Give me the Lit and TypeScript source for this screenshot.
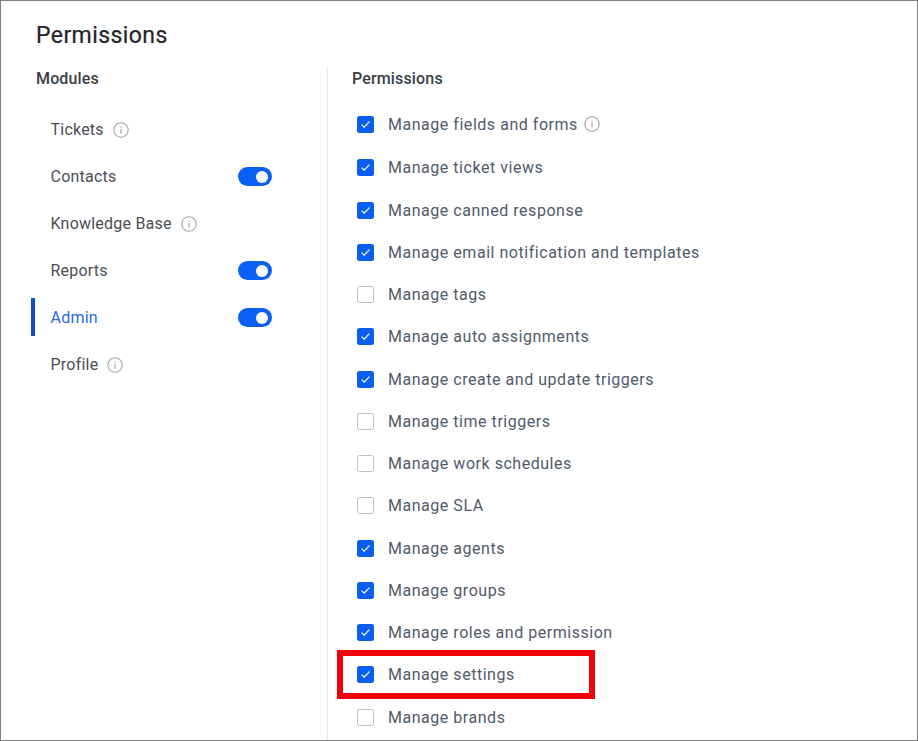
import { LitElement, html, css, svg } from "lit";
import { customElement } from "lit/decorators.js";

const info = svg`<svg class="info" viewBox="0 0 16 16" width="16" height="16" fill="none">
  <circle cx="8" cy="8" r="7.2" stroke="#a3a6aa" stroke-width="1.1"/>
  <rect x="7.4" y="7" width="1.2" height="4.6" fill="#a3a6aa"/>
  <rect x="7.4" y="4.4" width="1.2" height="1.3" fill="#a3a6aa"/>
</svg>`;

const modules = [
  { name: "Tickets", info: true },
  { name: "Contacts", toggle: true },
  { name: "Knowledge Base", info: true },
  { name: "Reports", toggle: true },
  { name: "Admin", toggle: true, active: true },
  { name: "Profile", info: true },
];

const perms: [string, boolean, boolean?][] = [
  ["Manage fields and forms", true, true],
  ["Manage ticket views", true],
  ["Manage canned response", true],
  ["Manage email notification and templates", true],
  ["Manage tags", false],
  ["Manage auto assignments", true],
  ["Manage create and update triggers", true],
  ["Manage time triggers", false],
  ["Manage work schedules", false],
  ["Manage SLA", false],
  ["Manage agents", true],
  ["Manage groups", true],
  ["Manage roles and permission", true],
  ["Manage settings", true],
  ["Manage brands", false],
];

@customElement("app-root")
export class AppRoot extends LitElement {
  static styles = css`
    :host {
      display: block;
      width: 918px;
      height: 741px;
      font-family: Roboto, "Liberation Sans", sans-serif;
      overflow: hidden;
    }
    .frame {
      position: relative;
      box-sizing: border-box;
      width: 918px;
      height: 741px;
      border: 1px solid #7f7f7f;
      background: #fff;
      padding: 21px 0 0 35px;
      display: flex;
      flex-direction: column;
    }
    h1 {
      margin: 0;
      font-size: 23px;
      line-height: 28px;
      font-weight: 400;
      letter-spacing: 0.42px;
      color: #1f2328;
      -webkit-text-stroke: 0.2px #1f2328;
    }
    .cols {
      flex: 1;
      display: flex;
      margin-top: 17px;
      min-height: 0;
    }
    .left {
      width: 292px;
      box-sizing: border-box;
      border-right: 1.5px solid #e6e8ec;
      flex: none;
    }
    .head {
      font-size: 16px;
      line-height: 20px;
      font-weight: 500;
      color: #3a3e45;
      letter-spacing: 0.15px;
      margin-top: 2px;
    }
    .mods {
      margin-top: 17px;
      display: flex;
      flex-direction: column;
    }
    .mod {
      position: relative;
      height: 47px;
      display: flex;
      align-items: center;
      padding: 0 55px 0 14.5px;
      gap: 9px;
      font-size: 16px;
      letter-spacing: 0.22px;
      color: #4a4e55;
    }
    .mod.active { color: #2a69dc; }
    .mod.active::before {
      content: "";
      position: absolute;
      left: -5px;
      top: 4px;
      width: 4px;
      height: 38px;
      background: #0a4fd0;
    }
    .toggle {
      margin-left: auto;
      width: 34px;
      height: 19px;
      border-radius: 10px;
      background: #0a60f5;
      position: relative;
      flex: none;
    }
    .toggle::after {
      content: "";
      position: absolute;
      right: 4px;
      top: 3.5px;
      width: 12px;
      height: 12px;
      border-radius: 50%;
      background: #fff;
    }
    .right {
      flex: 1;
      padding-left: 24px;
    }
    .list {
      margin-top: 14px;
      padding-left: 5px;
      display: flex;
      flex-direction: column;
    }
    .perm {
      height: 42.25px;
      display: flex;
      align-items: center;
      gap: 14px;
      font-size: 16px;
      letter-spacing: 0.53px;
      color: #515a6b;
    }
    .perm:first-child { margin-bottom: 1.5px; }
    .perm .info { margin-left: -8px; }
    .box {
      box-sizing: border-box;
      width: 17px;
      height: 17px;
      border-radius: 2.5px;
      border: 1.3px solid #bcc3ce;
      background: #fff;
      flex: none;
      display: flex;
      align-items: center;
      justify-content: center;
    }
    .box.on {
      border: none;
      background: #0a5ff0;
    }
    .highlight {
      position: absolute;
      left: 336px;
      top: 649px;
      width: 258px;
      height: 49px;
      box-sizing: border-box;
      border: 6px solid #f00008;
    }
    .info { flex: none; }
  `;

  render() {
    return html`<div class="frame">
      <h1>Permissions</h1>
      <div class="cols">
        <div class="left">
          <div class="head">Modules</div>
          <div class="mods">
            ${modules.map(
              (m) => html`<div class="mod ${m.active ? "active" : ""}">
                <span>${m.name}</span>
                ${m.info ? info : ""}
                ${m.toggle ? html`<span class="toggle"></span>` : ""}
              </div>`
            )}
          </div>
        </div>
        <div class="right">
          <div class="head">Permissions</div>
          <div class="list">
            ${perms.map(
              ([name, on, hasInfo]) => html`<div class="perm">
                <span class="box ${on ? "on" : ""}">
                  ${on
                    ? svg`<svg width="11" height="9" viewBox="0 0 11 9" fill="none"><path d="M1.6 4.6 4.2 7.2 9.4 1.6" stroke="#fff" stroke-width="1.2"/></svg>`
                    : ""}
                </span>
                <span>${name}</span>
                ${hasInfo ? info : ""}
              </div>`
            )}
          </div>
        </div>
      </div>
      <div class="highlight"></div>
    </div>`;
  }
}
